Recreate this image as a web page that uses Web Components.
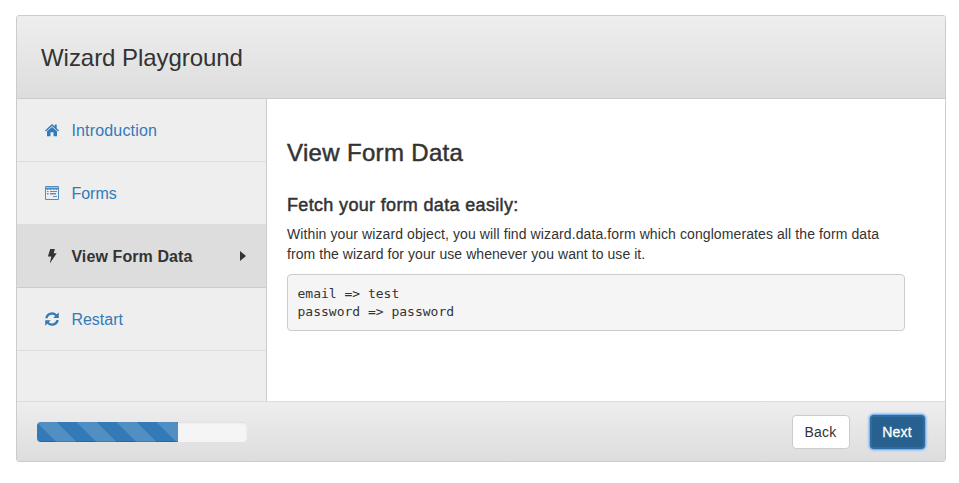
<!DOCTYPE html>
<html lang="en">
<head>
<meta charset="utf-8">
<title>Wizard Playground</title>
<style>
body{margin:0;padding:15px 13px 21px 16px;background:#fff;color:#333;font:14px/20px "Liberation Sans",Arial,sans-serif}
</style>
</head>
<body>
<wizard-frame>
  <span slot="title">Wizard Playground</span>
  <wizard-step slot="steps" icon="home" style="--ls:.17px">Introduction</wizard-step>
  <wizard-step slot="steps" icon="form" style="--ls:.02px">Forms</wizard-step>
  <wizard-step slot="steps" icon="flash" active style="--ls:.1px">View Form Data</wizard-step>
  <wizard-step slot="steps" icon="refresh">Restart</wizard-step>
  <wizard-card heading="View Form Data" subheading="Fetch your form data easily:">
    <span slot="line1">Within your wizard object, you will find wizard.data.form which conglomerates all the form data</span>
    <span slot="line2">from the wizard for your use whenever you want to use it.</span>
    <span slot="code">email =&gt; test
password =&gt; password</span>
  </wizard-card>
  <wizard-progress slot="footer"></wizard-progress>
  <wizard-button slot="footer">Back</wizard-button>
  <wizard-button slot="footer" primary>Next</wizard-button>
</wizard-frame>
<script>
class WizardFrame extends HTMLElement{
  constructor(){super();this.attachShadow({mode:'open'}).innerHTML=`
  <style>
  :host{display:flex;flex-direction:column;box-sizing:border-box;height:447px;border:1px solid #ccc;border-radius:3px;overflow:hidden}
  header{box-sizing:border-box;height:83px;padding-left:24px;display:flex;align-items:center;border-bottom:1px solid #ccc;background:linear-gradient(#eee,#ddd)}
  h3{margin:1px 0 0;font-size:24px;line-height:26px;font-weight:400;letter-spacing:-.05px}
  .body{flex:1;display:flex;min-height:0}
  nav{box-sizing:border-box;width:250px;background:#eee;border-right:1px solid #ccc}
  main{flex:1}
  footer{box-sizing:border-box;height:60px;border-top:1px solid #ddd;display:flex;align-items:center;padding:0 20px;background:linear-gradient(#eee,#ddd)}
  </style>
  <header><h3><slot name="title"></slot></h3></header>
  <div class="body"><nav><slot name="steps"></slot></nav><main><slot></slot></main></div>
  <footer><slot name="footer"></slot></footer>`}
}
const icons={
 home:'<path d="M0 7.4 7 1l2.7 2.4V1.6h2v3.6L14 7.4l-.8 1L7 2.9.8 8.4z"/><path d="M7 3.9 12 8.3v4.9H8.5V9.3h-3v3.9H2V8.3z"/>',
 form:'<path d="M1.2 0h11.6A1.2 1.2 0 0 1 14 1.2v11.6a1.2 1.2 0 0 1-1.2 1.2H1.2A1.2 1.2 0 0 1 0 12.8V1.2A1.2 1.2 0 0 1 1.2 0zM1 3.3V13h12V3.3l-1.5.7-1.5-.8-1.5.8L7 3.2 5.5 4 4 3.2 2.5 4z" fill-rule="evenodd" opacity=".85"/><path d="M1 1h12v1H1z" fill="#eee" opacity=".55"/><path d="M2 5h1.5v1H2zM5 5h7v1H5zM2 7h1.5v1.5H2zM5 7h6v1.5H5zM8 10h4v1H8z" opacity=".8"/>',
 flash:'<path d="M5.2 0h4.7L8.7 4.3h3L4.8 14.4l1.5-6.8H2.9z"/>',
 refresh:'<path d="M.3 6.2A6.7 6.7 0 0 1 11.7 2.3L13.8.4v5.5H8.3l1.9-2A4.6 4.6 0 0 0 2.6 6.2zM13.7 7.9A6.7 6.7 0 0 1 2.3 11.8L.2 13.7V8.2h5.5l-1.9 2a4.6 4.6 0 0 0 7.6-2.3z"/>'};
class WizardStep extends HTMLElement{
  connectedCallback(){this.attachShadow({mode:'open'}).innerHTML=`
  <style>
  :host{display:flex;box-sizing:border-box;height:63px;align-items:center;padding:0 20px 0 28px;border-bottom:1px solid #ddd;color:#337ab7;font-size:16px;line-height:20px;letter-spacing:var(--ls,0)}
  :host([active]){background:#ddd;border-color:#ccc;color:#333;font-weight:700}
  svg{width:14px;height:14px;margin-right:12.4px;fill:currentColor;flex:none;overflow:visible}
  span{flex:1;white-space:nowrap;padding-top:2px}
  i{display:none;border:5px solid transparent;border-left:6px solid #333;border-right:0}
  :host([active]) i{display:block}
  </style><svg viewBox="0 0 14 14">${icons[this.getAttribute('icon')]}</svg><span><slot></slot></span><i></i>`}
}
class WizardCard extends HTMLElement{
  connectedCallback(){this.attachShadow({mode:'open'}).innerHTML=`
  <style>
  :host{display:block;padding:41px 40px 0 20px}
  h3,h4{margin:0;font-weight:400;-webkit-text-stroke:.5px #333;white-space:nowrap}
  h3{font-size:24px;line-height:26px;letter-spacing:.33px}
  h4{margin-top:29px;font-size:18px;line-height:20px;letter-spacing:.34px}
  p{margin:9px 0 10px;white-space:nowrap}
  .a{letter-spacing:.097px}.b{letter-spacing:.06px}
  pre{box-sizing:border-box;height:57px;margin:0;padding:9.5px;border:1px solid #ccc;border-radius:4px;background:#f5f5f5;font:13px/18px "DejaVu Sans Mono",monospace}
  </style>
  <h3>${this.getAttribute('heading')}</h3><h4>${this.getAttribute('subheading')}</h4>
  <p><span class="a"><slot name="line1"></slot></span><br><span class="b"><slot name="line2"></slot></span></p>
  <pre><slot name="code"></slot></pre>`}
}
class WizardProgress extends HTMLElement{
  constructor(){super();this.attachShadow({mode:'open'}).innerHTML=`
  <style>
  :host{display:block;width:210px;height:20px;margin-right:auto;border-radius:4px;overflow:hidden;background:#f5f5f5;box-shadow:inset 0 1px 2px rgba(0,0,0,.1)}
  div{width:141px;height:20px;background:linear-gradient(45deg,rgba(255,255,255,.15) 25%,transparent 25%,transparent 50%,rgba(255,255,255,.15) 50%,rgba(255,255,255,.15) 75%,transparent 75%) 0 0/40px 40px #337ab7;box-shadow:inset 0 -1px 0 rgba(0,0,0,.15)}
  </style><div></div>`}
}
class WizardButton extends HTMLElement{
  constructor(){super();this.attachShadow({mode:'open'}).innerHTML=`
  <style>
  :host{display:block}
  button{box-sizing:border-box;display:block;width:58px;height:34px;padding:0 1px 0 0;border:1px solid #ccc;border-radius:4px;background:#fff;color:#333;font:14px/20px "Liberation Sans",Arial,sans-serif;letter-spacing:.2px}
  :host([primary]){margin-left:20px}
  :host([primary]) button{width:55px;background:#286090;border:2px solid #2e6da4;color:#fff;box-shadow:0 0 0 1px #7fb3ec,0 0 2px 2px #a5c9f3;-webkit-text-stroke:.3px #fff}
  </style><button><slot></slot></button>`}
}
customElements.define('wizard-frame',WizardFrame);
customElements.define('wizard-step',WizardStep);
customElements.define('wizard-card',WizardCard);
customElements.define('wizard-progress',WizardProgress);
customElements.define('wizard-button',WizardButton);
</script>
</body>
</html>
